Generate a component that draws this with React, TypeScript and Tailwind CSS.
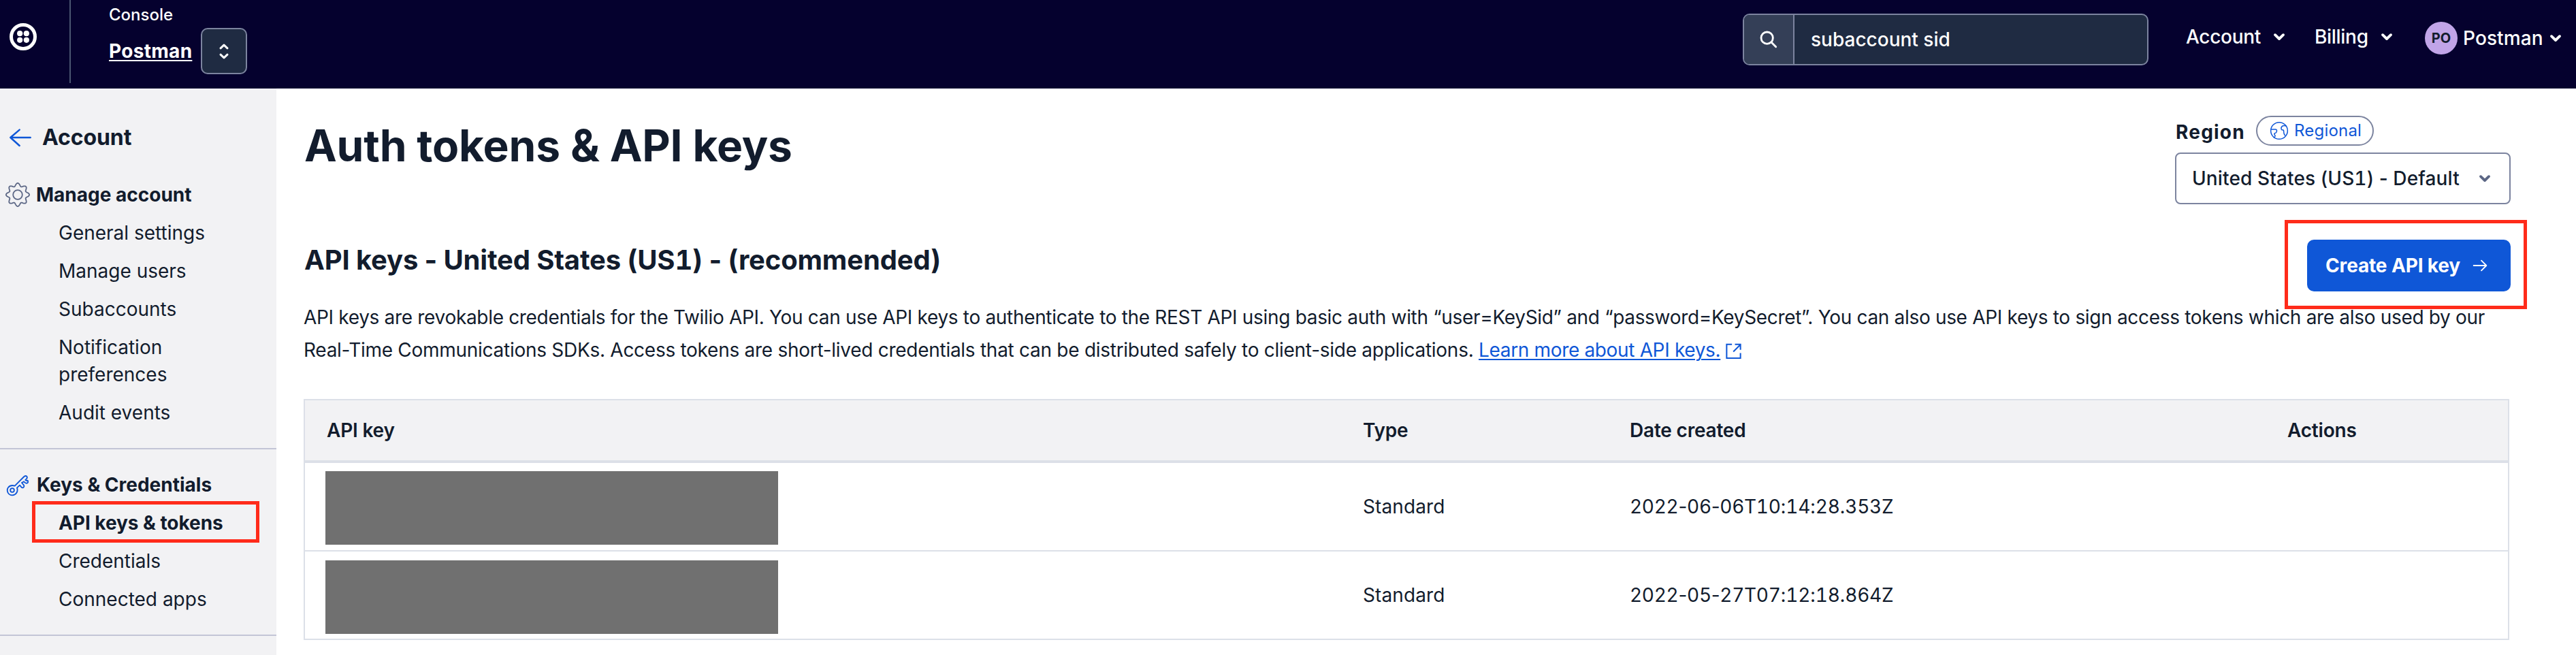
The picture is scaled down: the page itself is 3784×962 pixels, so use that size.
function Chevron({ className = "" }: { className?: string }) {
  return (
    <svg viewBox="0 0 20 20" className={"h-5 w-5 shrink-0 " + className} fill="none" stroke="currentColor" strokeWidth="3.9" strokeLinecap="round" strokeLinejoin="round">
      <path d="M4 7.2 10 13 16 7.2" />
    </svg>
  );
}

function gearPath() {
  const pts: string[] = [];
  for (let a = 0; a < 360; a += 3) {
    const t = (a * Math.PI) / 180;
    const r = 14.9 + 2.2 * Math.cos(8 * t);
    pts.push(`${(19 + r * Math.sin(t)).toFixed(2)} ${(19 - r * Math.cos(t)).toFixed(2)}`);
  }
  return "M" + pts.join("L") + "Z";
}
const GEAR = gearPath();

/* Sets only the digits in tabular figures; punctuation keeps its own width. */
function Figures({ children }: { children: string }) {
  return (
    <>
      {children.split(/(\d+)/).map((part, i) => (i % 2 ? <span key={i} className="tabular-nums">{part}</span> : part))}
    </>
  );
}

function NavItem({ children, active = false }: { children: string; active?: boolean }) {
  return (
    <div className="relative py-2 pr-16 pl-[86px]">
      <a className={active ? "font-bold tracking-[-0.05px]" : "font-normal"}>{children}</a>
      {active && <div className="absolute -top-[4px] left-[47px] h-[61px] w-[334px] border-[5px] border-[#ff2b1a]" />}
    </div>
  );
}

function Header() {
  return (
    <header className="flex h-[130px] items-start bg-[#05012e] text-white">
      <svg viewBox="0 0 120 120" className="mt-[34px] ml-[14px] h-10 w-10 shrink-0">
        <circle cx="60" cy="60" r="52.5" fill="none" stroke="#fff" strokeWidth="15" />
        <g fill="#fff">
          <circle cx="45.5" cy="45.5" r="12.3" />
          <circle cx="74.5" cy="45.5" r="12.3" />
          <circle cx="45.5" cy="74.5" r="12.3" />
          <circle cx="74.5" cy="74.5" r="12.3" />
        </g>
      </svg>
      <div className="ml-12 h-[122px] w-[2px] shrink-0 bg-[#4b5671]" />
      <div className="ml-14 w-[203px] pt-[6px]">
        <div className="text-2xl leading-8 font-medium">Console</div>
        <div className="mt-[3px] flex items-center justify-between">
          <a className="text-[28px] leading-10 font-bold tracking-[0.3px] underline decoration-2 underline-offset-[3px]">Postman</a>
          <button className="flex h-[68px] w-[68px] items-center justify-center rounded-[10px] border-2 border-[#7c849f] bg-[#1f2b42]">
            <svg viewBox="960 185 54 80" className="h-[27px] w-[18px]" fill="none" stroke="#fff" strokeWidth="9" strokeLinecap="round" strokeLinejoin="round">
              <path d="M972 211 987 197 1002 211M972 239 987 253 1002 239" />
            </svg>
          </button>
        </div>
      </div>
      <div className="mt-5 ml-auto flex h-[76px] w-[596px] overflow-hidden rounded-[10px] border-2 border-[#7c849f] bg-[#1f2b42]">
        <div className="flex w-[74px] shrink-0 items-center justify-center border-r-2 border-[#7c849f] bg-[#343f57]">
          <svg viewBox="0 0 84 84" className="h-7 w-7" fill="none" stroke="#fff" strokeWidth="8.5" strokeLinecap="round">
            <circle cx="35" cy="35" r="26" />
            <path d="M54 54 74 74" />
          </svg>
        </div>
        <div className="flex items-center pl-6 text-[28px] leading-10 font-medium">subaccount sid</div>
      </div>
      <nav className="flex w-[628px] items-start text-[28px] leading-10 font-medium tracking-[-0.3px]">
        <div className="mt-[34px] ml-[55px] flex w-[147px] items-center justify-between">
          Account <Chevron />
        </div>
        <div className="mt-[34px] ml-[42px] flex w-[116px] items-center justify-between">
          Billing <Chevron />
        </div>
        <div className="mt-8 ml-[46px] flex h-12 items-center">
          <span className="flex h-12 w-12 items-center justify-center rounded-full bg-[#c1a5e8] text-xl font-bold tracking-normal text-[#121c2d]">PO</span>
          <span className="ml-2 w-[126px] tracking-[0.1px]">Postman</span>
          <Chevron />
        </div>
      </nav>
    </header>
  );
}

function Sidebar() {
  return (
    <aside className="w-[406px] shrink-0 bg-[#f2f2f4] pt-[52px] text-[28px] leading-10">
      <div className="flex h-10 items-center text-[32px] font-bold tracking-[-0.1px]">
        <svg viewBox="39 560 102 90" className="ml-[13px] h-[30px] w-[34px]" fill="none" stroke="#0f57d7" strokeWidth="7.5" strokeLinecap="round" strokeLinejoin="round">
          <path d="M134 605H46M86 571 46 605 86 641" />
        </svg>
        <span className="ml-[15px]">Account</span>
      </div>
      <div className="mt-9 flex h-14 items-center font-bold">
        <svg viewBox="0 0 38 38" className="ml-[7px] h-[38px] w-[38px]" fill="none" stroke="#5c6785" strokeWidth="1.8" strokeLinejoin="round">
          <path d={GEAR} />
          <circle cx="19" cy="19" r="6.8" />
        </svg>
        <span className="ml-2">Manage account</span>
      </div>
      <NavItem>General settings</NavItem>
      <NavItem>Manage users</NavItem>
      <NavItem>Subaccounts</NavItem>
      <NavItem>Notification preferences</NavItem>
      <NavItem>Audit events</NavItem>
      <div className="mt-6 border-t-2 border-[#c3c5d6] pt-6">
        <div className="flex h-14 items-center font-bold">
          <svg viewBox="27 642 102 99" className="ml-[9px] h-[33px] w-[34px]" fill="none" stroke="#0f57d7" strokeWidth="5.6" strokeLinecap="round" strokeLinejoin="round">
            <path d="M65 695 106 654Q113 648 118 653 122 659 116 665L112 669Q116 674 122 671 126 681 119 683 114 685 105 676L96 681 105 692Q108 697 103 702 98 705 94 700L87 692 75 703Q79 714 74 724 67 736 54 736 41 736 35 725 29 712 36 702 47 689 65 695Z" />
            <circle cx="54" cy="714" r="8.5" />
          </svg>
          <span className="ml-[11px]">Keys &amp; Credentials</span>
        </div>
        <NavItem active>API keys &amp; tokens</NavItem>
        <NavItem>Credentials</NavItem>
        <NavItem>Connected apps</NavItem>
      </div>
      <div className="mt-6 border-t-2 border-[#c3c5d6]" />
    </aside>
  );
}

function RegionPicker() {
  return (
    <div className="w-[493px]">
      <div className="flex items-end">
        <span className="pl-px text-[28px] leading-10 font-bold tracking-[1.2px]">Region</span>
        <span className="mr-[201px] ml-auto flex h-11 w-[173px] items-center rounded-full border-2 border-[#7c849f] text-2xl tracking-[0.2px] text-[#0f57d7]">
          <svg viewBox="462 84 84 84" className="ml-[18px] h-7 w-7" fill="none" stroke="#0f57d7" strokeWidth="4.5" strokeLinecap="round" strokeLinejoin="round">
            <circle cx="504" cy="126" r="37" />
            <path d="M468 120H488Q495 121 493 129 492 136 484 137 480 141 486 147 488 150 481 156M534 105Q526 102 519 105 512 109 513 117 514 124 520 122 525 123 524 131 524 141 530 147" />
          </svg>
          <span className="ml-2">Regional</span>
        </span>
      </div>
      <div className="mt-[10px] flex h-[76px] items-center justify-between rounded-lg border-2 border-[#7c849f] pr-[26px] pl-[23px] text-[28px] font-medium tracking-[0.13px]">
        <span>
          <Figures>United States (US1) - Default</Figures>
        </span>
        <Chevron className="text-[#5c6785]" />
      </div>
    </div>
  );
}

const COLS = "grid grid-cols-[1522px_392px_966px_356px]";

function KeyRow({ date, first = false }: { date: string; first?: boolean }) {
  return (
    <div className={COLS + " h-[130px] items-center border-b-2 border-[#dce0e8]"}>
      <div className={(first ? "mt-[4px]" : "mt-[6px]") + " ml-[30px] h-[108px] w-[665px] bg-[#707070]"} />
      <div className="pl-8 tracking-[0.1px]">Standard</div>
      <div className="pl-8 tracking-[-0.3px]">
        <Figures>{date}</Figures>
      </div>
      <div />
    </div>
  );
}

export default function App() {
  return (
    <div className="h-[962px] w-[3784px] overflow-hidden bg-white font-[Inter,sans-serif] text-[#121c2d]">
      <Header />
      <div className="flex h-[832px]">
        <Sidebar />
        <main className="flex-1 pt-10 pr-24 pl-10">
          <div className="flex items-start justify-between">
            <h1 className="mt-1 pl-px text-[64px] leading-[80px] font-bold tracking-[-0.17px]">Auth tokens &amp; API keys</h1>
            <RegionPicker />
          </div>
          <div className="mt-[52px] flex items-start justify-between">
            <h2 className="mt-[2px] pl-px text-[40px] leading-[56px] font-bold tracking-[-0.15px]">
              <Figures>API keys - United States (US1) - (recommended)</Figures>
            </h2>
            <div className="relative">
              <button className="flex h-[76px] w-[299px] items-center rounded-[10px] bg-[#0f57d7] pl-[27px] text-[28px] leading-10 font-bold tracking-[-0.15px] text-white">
                Create API key
                <svg viewBox="1350 690 72 60" className="ml-[17px] h-5 w-6" fill="none" stroke="#fff" strokeWidth="5.5" strokeLinecap="round" strokeLinejoin="round">
                  <path d="M1358 720H1413M1392 698 1414 720 1392 742" />
                </svg>
              </button>
              <div className="absolute -top-[29px] -left-[33px] h-[131px] w-[356px] border-[5px] border-[#ff2b1a]" />
            </div>
          </div>
          <p className="mt-[14px] text-[28px] leading-[48px] tracking-[-0.32px] whitespace-nowrap">
            API keys are revokable credentials for the Twilio API. You can use API keys to authenticate to the REST API using basic auth with “user=KeySid” and “password=KeySecret”. You can also use API keys to sign access tokens which are also used by our
            <br />
            <span className="tracking-[-0.276px]">Real-Time Communications SDKs. Access tokens are short-lived credentials that can be distributed safely to client-side applications. </span>
            <a className="tracking-[-0.34px] text-[#0f57d7] underline decoration-2 underline-offset-[3px]">Learn more about API keys.</a>
            <svg viewBox="1124 70 74 74" className="ml-[7px] inline h-[25px] w-[25px] align-[-4px]" fill="none" stroke="#0f57d7" strokeWidth="6">
              <path d="M1154 78H1131V138H1191V116M1160 110 1191 79M1167 78H1191V102" />
            </svg>
          </p>
          <div className="mt-12 w-[3240px] border-x-2 border-t-2 border-[#dce0e8] text-[28px] leading-10">
            <div className={COLS + " border-b-4 border-[#dce0e8] bg-[#f2f2f4] py-6 font-semibold tracking-[-0.2px]"}>
              <div className="pl-8">API key</div>
              <div className="pl-8">Type</div>
              <div className="pl-8">Date created</div>
              <div className="pl-8">Actions</div>
            </div>
            <KeyRow first date="2022-06-06T10:14:28.353Z" />
            <KeyRow date="2022-05-27T07:12:18.864Z" />
          </div>
        </main>
      </div>
    </div>
  );
}
